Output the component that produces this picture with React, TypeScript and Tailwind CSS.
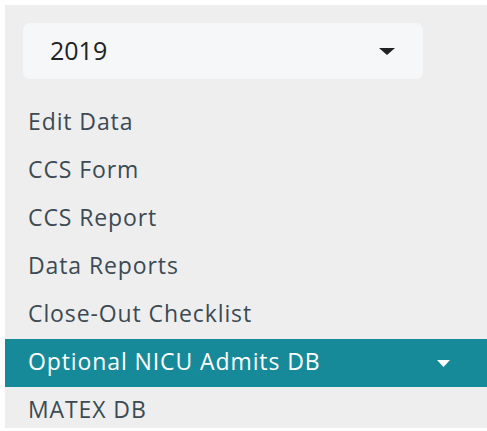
import React from "react";

const items = [
  "Edit Data",
  "CCS Form",
  "CCS Report",
  "Data Reports",
  "Close-Out Checklist",
];

function Caret({ className, w, h }: { className: string; w: number; h: number }) {
  return (
    <svg width={w} height={h} viewBox={`0 0 ${w} ${h}`} className={className}>
      <path d={`M0 0H${w}L${w / 2} ${h}z`} fill="currentColor" />
    </svg>
  );
}

export default function App() {
  return (
    <div
      className="w-[487px] h-[431px] bg-white pt-[5px] pl-[5px] overflow-hidden"
      style={{ fontFamily: '"Open Sans", sans-serif' }}
    >
      <div className="bg-[#eeeeee] h-[423px] flex flex-col pt-[18px]">
        <div className="shrink-0 ml-[18px] w-[400px] h-[56px] rounded-[7px] bg-[#f6f7f9] flex items-center justify-between pl-[27px] pr-[28px]">
          <span className="text-[25px] leading-none text-[#222] -mt-[2px]">2019</span>
          <Caret className="text-[#222]" w={16} h={7} />
        </div>
        <div className="shrink-0 mt-[20px] flex flex-col">
          {items.map((t) => (
            <div
              key={t}
              className="h-[48px] flex items-center pl-[23px] text-[23px] tracking-[0.9px] text-[#3c4a53] -translate-y-[2px]"
            >
              {t}
            </div>
          ))}
          <div className="h-[48px] flex items-center justify-between pl-[23px] pr-[37px] bg-[#178a9a] text-white text-[23px] tracking-[0.9px]">
            <span className="-translate-y-[2px]">Optional NICU Admits DB</span>
            <Caret className="text-white" w={13} h={7} />
          </div>
          <div className="h-[48px] flex items-center pl-[23px] text-[23px] tracking-[0.9px] text-[#3c4a53] -translate-y-[2px]">
            MATEX DB
          </div>
        </div>
      </div>
    </div>
  );
}
